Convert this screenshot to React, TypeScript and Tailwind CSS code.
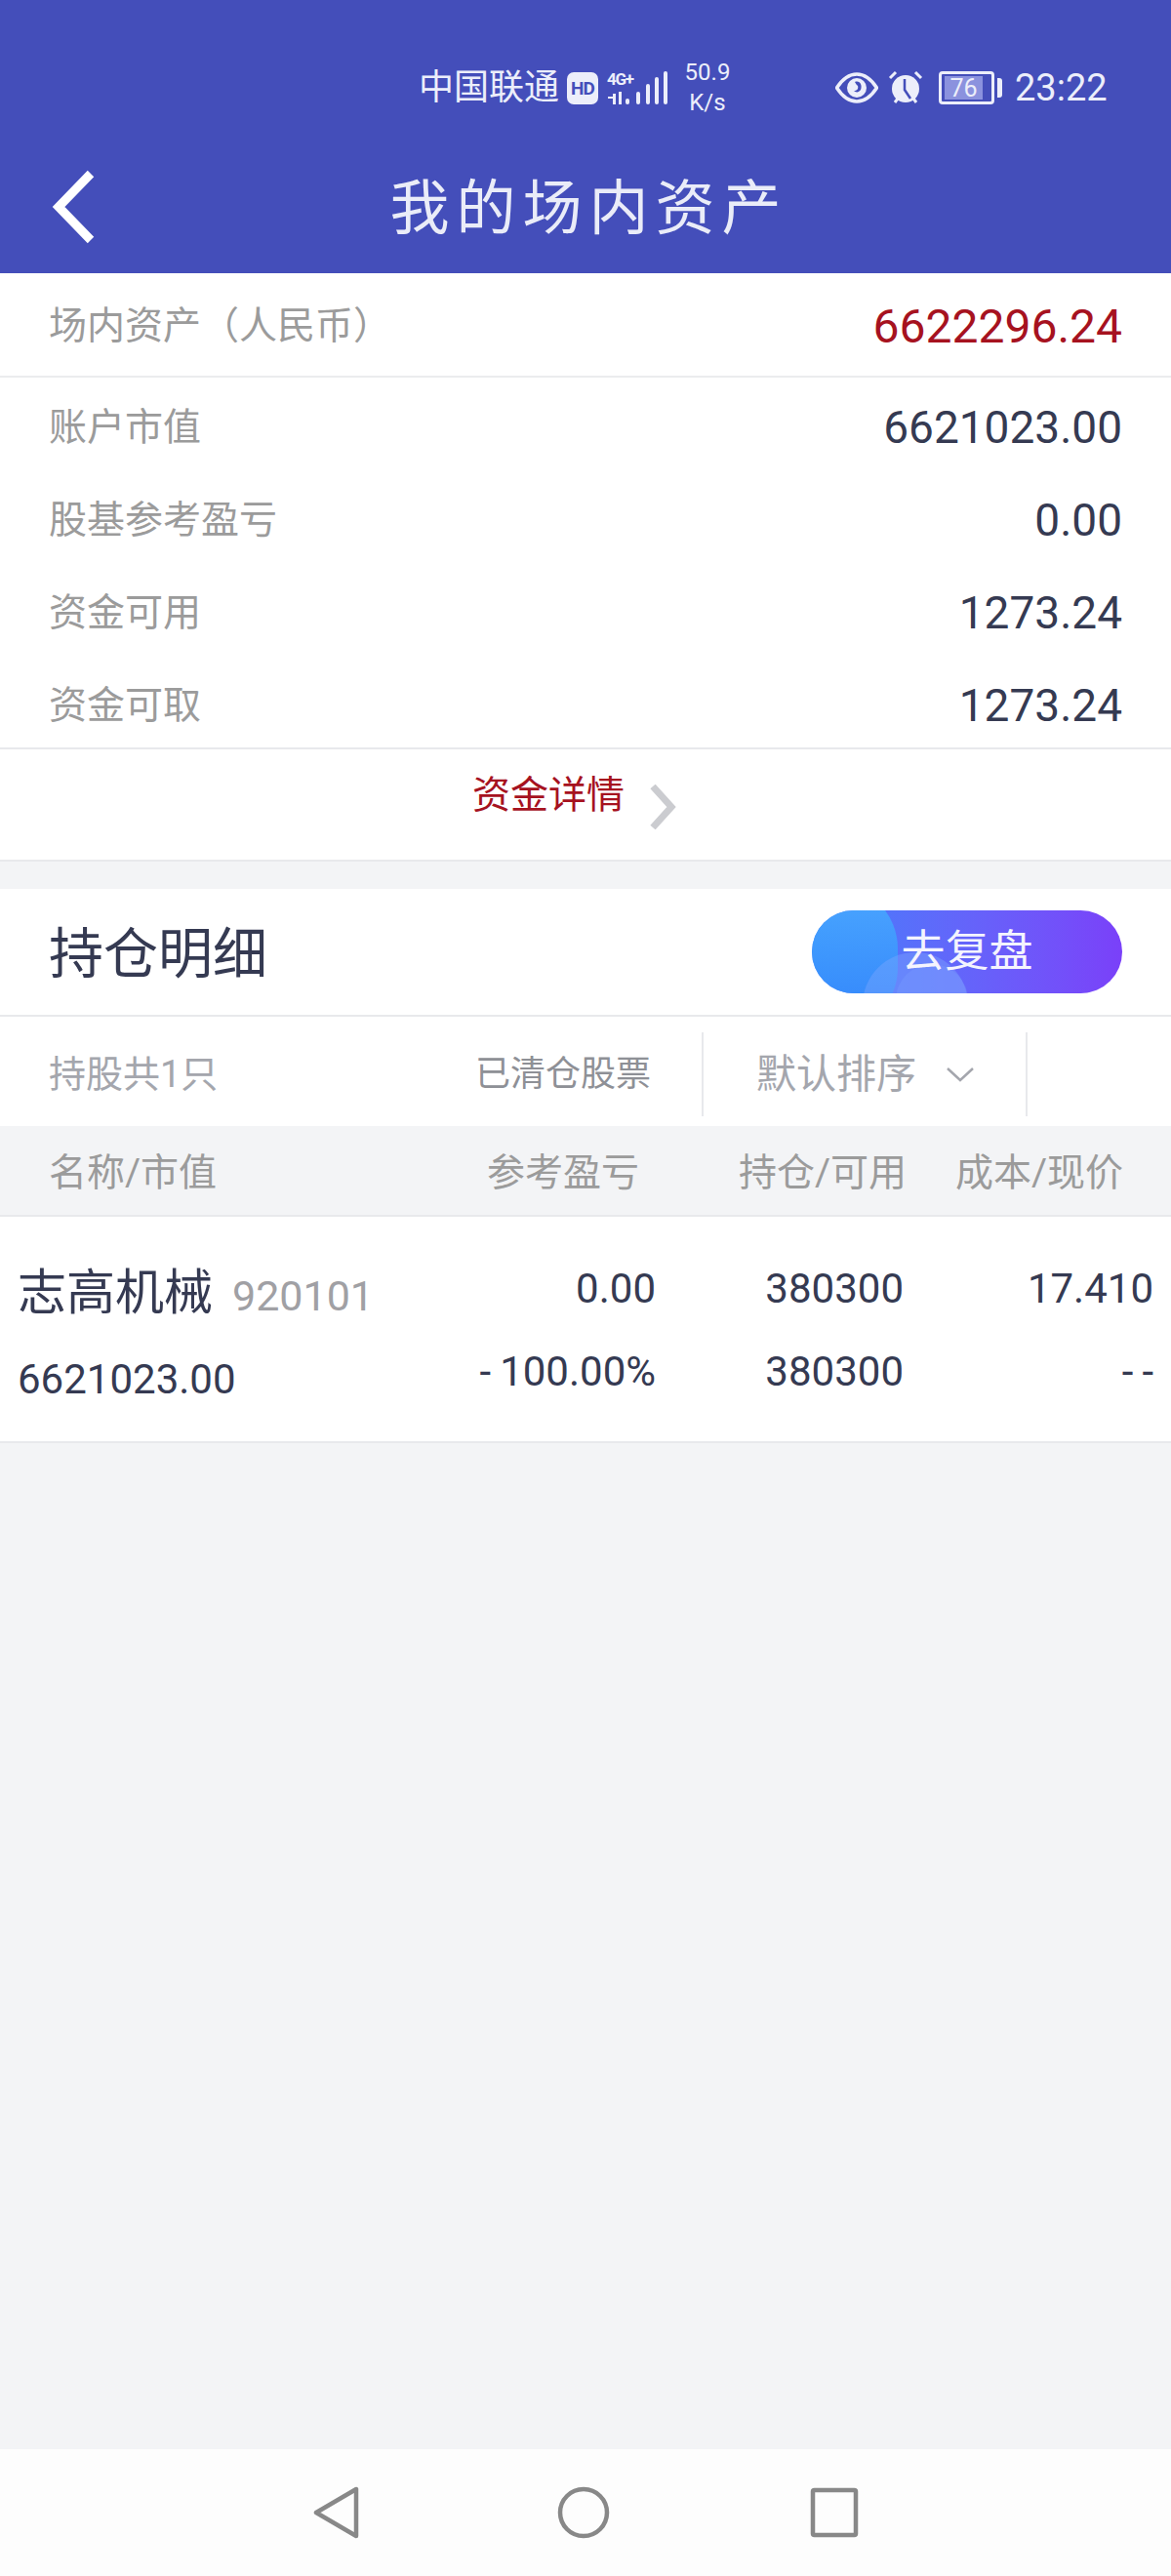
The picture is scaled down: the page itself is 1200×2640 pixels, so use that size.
import React from 'react';

const CJK = "font-['Roboto','Noto_Sans_CJK_SC',sans-serif]";

const rows = [
  { label: '账户市值', value: '6621023.00' },
  { label: '股基参考盈亏', value: '0.00' },
  { label: '资金可用', value: '1273.24' },
  { label: '资金可取', value: '1273.24' },
];

function StatusBar() {
  return (
    <div className="flex h-[60px] mt-[60px] items-center pl-[429px] text-[#eceefa]">
      <span className="text-[36px] leading-none w-[144px] whitespace-nowrap">中国联通</span>
      <span className="ml-[8px] flex h-[33px] w-[32px] items-center justify-center rounded-[7px] bg-[#eceefa] text-[19px] font-bold leading-none tracking-[-1px] text-[#444eba]">
        HD
      </span>
      <svg className="ml-[8px]" width="64" height="36" viewBox="0 0 64 36" fill="#eceefa">
        <text x="1" y="15" fontSize="17" fontWeight="700" fontFamily="Roboto, sans-serif" textLength="28">4G+</text>
        <rect x="7" y="24" width="3" height="11" />
        <rect x="13" y="22" width="3" height="13" />
        <rect x="2" y="27" width="6" height="2" />
        <rect x="20" y="29" width="4" height="6" rx="2" />
        <rect x="31" y="22" width="4" height="13" rx="2" />
        <rect x="41" y="14" width="4" height="21" rx="2" />
        <rect x="50" y="7" width="4" height="28" rx="2" />
        <rect x="59" y="1" width="4" height="34" rx="2" />
      </svg>
      <div className="ml-[14px] flex w-[52px] flex-col items-center text-[24px] leading-[31px]">
        <span>50.9</span>
        <span>K/s</span>
      </div>
      <svg className="ml-[105px]" width="44" height="32" viewBox="0 0 44 32">
        <path d="M1.5 16C8 6 15 2 22 2s14 4 20.500 14C36 26 29 30 22 30S8 26 1.500 16Z" fill="none" stroke="#eceefa" strokeWidth="3.500" />
        <circle cx="22" cy="16" r="10" fill="#eceefa" />
        <path d="M20 10c5-2 8 3 6 8-2 3-5 3-7 1 3 0 5-2 4-5-1-1-2-2-3-4Z" fill="#444eba" />
      </svg>
      <svg className="ml-[10px]" width="36" height="36" viewBox="0 0 36 36">
        <circle cx="18" cy="19" r="14" fill="#eceefa" />
        <path d="M17 9v11l6 9" fill="none" stroke="#444eba" strokeWidth="2.500" />
        <path d="M2 8l6-6M34 8l-6-6M7 33l3-4M29 33l-3-4" stroke="#eceefa" strokeWidth="3" />
      </svg>
      <div className="ml-[16px] flex items-center">
        <div className="flex h-[34px] w-[57px] items-center rounded-[4px] border-[3px] border-[#eceefa] pl-[3px]">
          <span className="flex h-[24px] w-[39px] items-center justify-center bg-[#8b92de] text-[25px] leading-none">76</span>
        </div>
        <span className="ml-[3px] h-[20px] w-[5px] rounded-r-[3px] bg-[#eceefa]" />
      </div>
      <span className="ml-[13px] text-[38px] leading-none">23:22</span>
    </div>
  );
}

function ReviewButton() {
  return (
    <button className="relative h-[85px] w-[318px] overflow-hidden rounded-full bg-gradient-to-r from-[#3d80fb] to-[#7a40f9] text-[45px] leading-none text-[#f4f4fe]">
      <span className="absolute -left-[42px] -top-[26px] h-[150px] w-[130px] rounded-full bg-gradient-to-b from-[#4bacff] to-[#2f84fb] opacity-90" />
      <span className="absolute left-[52px] top-[43px] h-[110px] w-[108px] rounded-full bg-[#7fa8ff] opacity-40" />
      <span className="absolute left-[86px] top-[55px] h-[90px] w-[74px] rounded-full bg-[#7fa8ff] opacity-25" />
      <span className="relative block text-center">去复盘</span>
    </button>
  );
}

function NavBar() {
  return (
    <div className="flex h-[130px] items-center bg-[#fdfdfd] pl-[320px]">
      <svg width="50" height="54" viewBox="0 0 50 54" fill="none" stroke="#888888" strokeWidth="4.500" strokeLinejoin="round">
        <path d="M45 3v48L4 27Z" />
      </svg>
      <svg className="ml-[201px]" width="54" height="54" viewBox="0 0 54 54" fill="none" stroke="#888888" strokeWidth="4.500">
        <circle cx="27" cy="27" r="24" />
      </svg>
      <svg className="ml-[205px]" width="50" height="52" viewBox="0 0 50 52" fill="none" stroke="#888888" strokeWidth="4.500" strokeLinejoin="round">
        <rect x="3" y="3" width="44" height="46" rx="1.500" />
      </svg>
    </div>
  );
}

export default function App() {
  return (
    <div className={`flex h-[2640px] w-[1200px] flex-col bg-[#f3f4f6] ${CJK}`}>
      {/* 顶部 */}
      <header className="h-[280px] bg-[#444eba]">
        <StatusBar />
        <div className="relative flex h-[160px] items-center justify-center">
          <svg className="absolute left-[51px] top-[54px]" width="52" height="76" viewBox="0 0 52 76" fill="none" stroke="#ffffff" strokeWidth="9" strokeLinejoin="miter">
            <path d="M42 4 9 38l33 34" />
          </svg>
          <h1 className="ml-[7px] mt-[28px] text-[61px] leading-none tracking-[7px] text-[#eaecf8]">我的场内资产</h1>
        </div>
      </header>

      {/* 资产 */}
      <section className="border-b-2 border-[#e8e9ec] bg-white">
        <div className="flex h-[107px] items-center justify-between border-b-2 border-[#ebecee] px-[50px] pt-[4px]">
          <span className="text-[39px] leading-none text-[#9b9b9b]">场内资产（人民币）</span>
          <span className="text-[48px] leading-none text-[#a6121f]">6622296.24</span>
        </div>
        <div className="flex flex-col gap-[9px] border-b-2 border-[#e8e9ec] pt-[8px]">
          {rows.map((r) => (
            <div key={r.label} className="flex h-[86px] items-center justify-between px-[50px]">
              <span className="text-[39px] leading-none text-[#9b9b9b]">{r.label}</span>
              <span className="text-[46px] leading-none text-[#353a52]">{r.value}</span>
            </div>
          ))}
        </div>
        <div className="flex h-[113px] items-start justify-center pr-[22px] pt-[24px]">
          <span className="text-[39px] leading-[46px] text-[#a6121f]">资金详情</span>
          <svg className="ml-[24px] mt-[12px]" width="30" height="46" viewBox="0 0 30 46" fill="none" stroke="#cbccd0" strokeWidth="7">
            <path d="M5 2l19 21L5 44" />
          </svg>
        </div>
      </section>

      {/* 持仓 */}
      <section className="mt-[28px] bg-white">
        <div className="flex h-[131px] items-center justify-between border-b-2 border-[#e8e9ec] px-[50px]">
          <h2 className="mt-[5px] text-[56px] leading-none text-[#353a52]">持仓明细</h2>
          <ReviewButton />
        </div>
        <div className="flex h-[112px] items-center pl-[50px] pt-[6px]">
          <span className="w-[437px] text-[38px] leading-none text-[#a4a6ad]">持股共1只</span>
          <span className="w-[232px] text-[36px] leading-none text-[#8e9096]">已清仓股票</span>
          <div className="flex h-[86px] w-[334px] items-center border-x-2 border-[#e8e9ec] pl-[54px]">
            <span className="text-[41px] leading-none text-[#a4a6ad]">默认排序</span>
            <svg className="ml-[30px]" width="30" height="18" viewBox="0 0 30 18" fill="none" stroke="#a4a6ad" strokeWidth="2.500">
              <path d="M2 3l13 12L28 3" />
            </svg>
          </div>
        </div>
        <div className="flex h-[93px] items-center border-b-2 border-[#e8e9ec] bg-[#f3f4f6] pl-[50px] pr-[49px] pt-[5px] text-[39px] leading-none text-[#9b9b9b]">
          <span className="flex-1">名称/市值</span>
          <span className="w-[200px] text-right">参考盈亏</span>
          <span className="w-[274px] text-right">持仓/可用</span>
          <span className="w-[222px] text-right">成本/现价</span>
        </div>
        <div className="flex h-[232px] border-b-2 border-[#e8e9ec] px-[18px] pt-[51px] text-[42px] leading-none text-[#353a52]">
          <div className="flex-1">
            <div className="flex h-[52px] items-end">
              <span className="text-[50px] leading-none">志高机械</span>
              <span className="ml-[20px] text-[43px] leading-none text-[#a0a0a4]">920101</span>
            </div>
            <div className="mt-[43px]">6621023.00</div>
          </div>
          <div className="flex w-[254px] flex-col items-end gap-[43px] pt-[2px]">
            <span>0.00</span>
            <span><span className="mr-[9px]">-</span>100.00%</span>
          </div>
          <div className="flex w-[254px] flex-col items-end gap-[43px] pt-[2px]">
            <span>380300</span>
            <span>380300</span>
          </div>
          <div className="flex w-[256px] flex-col items-end gap-[43px] pt-[2px]">
            <span>17.410</span>
            <span><span className="mr-[9px]">-</span>-</span>
          </div>
        </div>
      </section>

      <div className="flex-1" />
      <NavBar />
    </div>
  );
}
